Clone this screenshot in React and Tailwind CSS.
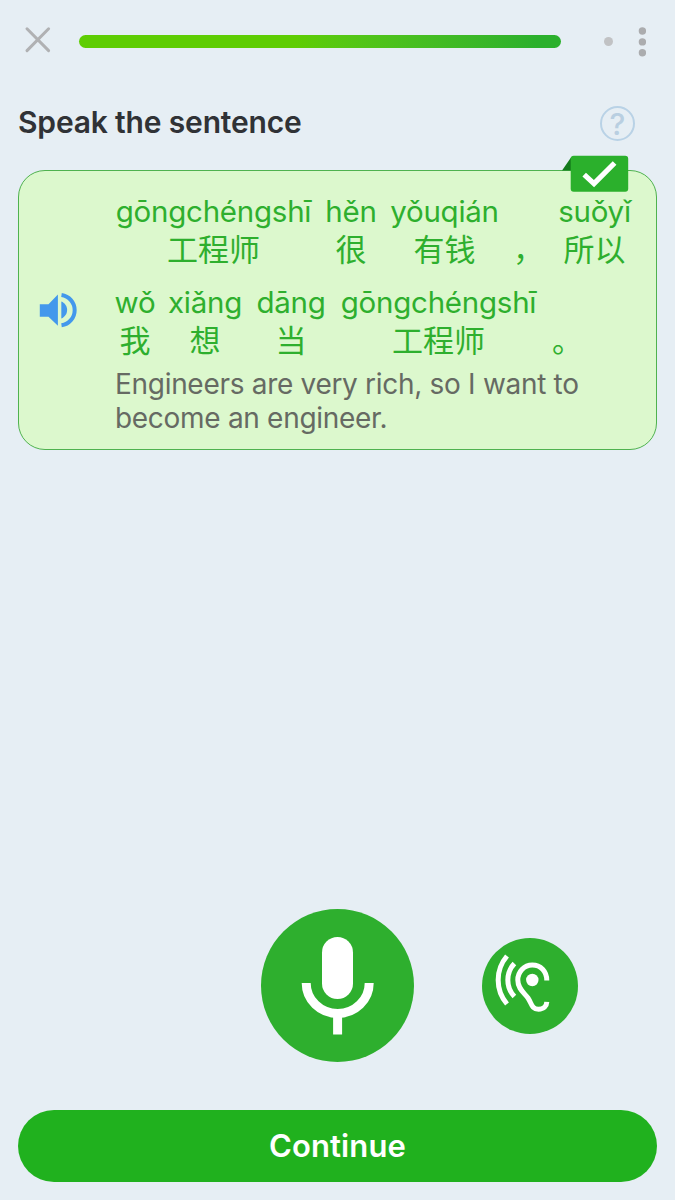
const LINE_ONE = [
  { pinyin: 'gōngchéngshī', hanzi: '工程师', cell: 'w-[195px]' },
  { pinyin: 'hěn', hanzi: '很', cell: 'w-[50px]' },
  { pinyin: 'yǒuqián', hanzi: '有钱', cell: 'w-[107px]' },
  { pinyin: '', hanzi: '，', cell: 'w-[31px]' },
  { pinyin: 'suǒyǐ', hanzi: '所以', cell: 'w-[71px]' },
];

const LINE_TWO = [
  { pinyin: 'wǒ', hanzi: '我', cell: 'w-[38px]' },
  { pinyin: 'xiǎng', hanzi: '想', cell: 'w-[72px]' },
  { pinyin: 'dāng', hanzi: '当', cell: 'w-[70px]' },
  { pinyin: 'gōngchéngshī', hanzi: '工程师', cell: 'w-[195px]' },
  { pinyin: '', hanzi: '。', cell: 'w-[33px]' },
];

function WordLine({ words }) {
  return (
    <div className="flex gap-[15px] text-[#2eaf2e]">
      {words.map((w, i) => (
        <div key={i} className={`flex shrink-0 flex-col items-center whitespace-nowrap ${w.cell}`}>
          <span className="h-[38px] text-[29.5px] leading-[38px] tracking-[-0.25px]">{w.pinyin}</span>
          <span className="h-9 font-['Noto_Sans_CJK_SC',sans-serif] text-[31px] leading-9 font-normal">{w.hanzi}</span>
        </div>
      ))}
    </div>
  );
}

function Header() {
  return (
    <header className="flex h-20 items-center pl-6">
      <svg className="h-7 w-7" viewBox="0 0 28 28" fill="none" stroke="#b0b1b3" strokeWidth="3" strokeLinecap="round">
        <path d="M3 2.8 24.6 24.6M24.6 2.8 3 24.6" />
      </svg>
      <div className="mt-[3px] ml-[27px] h-[13px] w-[482px] rounded-full bg-linear-to-r from-[#5ecd02] from-45% to-[#2bb02c] to-95%" />
      <div className="mt-[3px] ml-[43px] h-[9px] w-[9px] rounded-full bg-[#c1c2c4]" />
      <svg className="mt-[3px] ml-[25px] h-[30px] w-2" viewBox="0 0 8 30" fill="#abacae">
        <circle cx="4.4" cy="4" r="3.7" />
        <circle cx="4.4" cy="14.9" r="3.7" />
        <circle cx="4.4" cy="25.7" r="3.7" />
      </svg>
    </header>
  );
}

function CheckRibbon() {
  return (
    <svg className="absolute -top-4 left-[543px] h-[37px] w-[67px]" viewBox="0 0 67 37">
      <path d="M0 15.5 9 2.5V15.5Z" fill="#137a1b" />
      <rect x="8.7" y="0.7" width="57.5" height="36" rx="3" fill="#2bb02c" />
      <path d="M22.2 19.6 32 28.6 52.6 8" fill="none" stroke="#fff" strokeWidth="5.2" />
    </svg>
  );
}

export default function App() {
  return (
    <div className="flex h-[1200px] w-[675px] flex-col overflow-hidden bg-[#e6eef4] font-['Inter',sans-serif]">
      <Header />

      <div className="flex h-[90px] items-start justify-between pt-[22px] pr-10 pl-[18px]">
        <h1 className="text-[30px] leading-10 font-semibold tracking-[-0.17px] text-[#303236]">Speak the sentence</h1>
        <div className="mt-1 flex h-[35px] w-[35px] items-center justify-center rounded-full border-2 border-[#b9d2e6] text-[30px] leading-none font-medium text-[#b9cfe1]">
          ?
        </div>
      </div>

      <section className="relative mx-[18px] flex h-[280px] shrink-0 rounded-[27px] border border-[#4fb24f] bg-[#dcf8cd]">
        <CheckRibbon />
        <div className="flex w-[97px] shrink-0 items-center pl-[19.5px]">
          <svg className="h-9 w-[38px]" viewBox="0 0 38 36" fill="#4398ec">
            <path d="M.8 12.3H9.5L18.9 2.5V33.8L9.5 24.7H.8Z" />
            <path d="M22.3 9.6C26 11 28.1 14.4 28.1 18S26 25 22.3 26.6Z" />
            <path d="M22.5 3A15.3 15.3 0 0 1 22.5 33.3" fill="none" stroke="#4398ec" strokeWidth="4" />
          </svg>
        </div>
        <div className="pt-[21px]">
          <WordLine words={LINE_ONE} />
          <div className="h-[17px]" />
          <WordLine words={LINE_TWO} />
          <p className="mt-2.5 -ml-px text-[28px] leading-[34px] tracking-[-0.3px] whitespace-nowrap text-[#666a63]">
            Engineers are very rich, so I want to
            <br />
            become an engineer.
          </p>
        </div>
      </section>

      <div className="flex-1" />

      <div className="flex h-[154px] shrink-0 items-center pl-[261px]">
        <button className="h-[153px] w-[153px] rounded-full bg-[#2eaf2e]">
          <svg className="h-[153px] w-[153px]" viewBox="0 0 153 153">
            <rect x="61" y="28" width="31" height="62" rx="15.5" fill="#fff" />
            <path d="M45.2 74A31.5 30.5 0 0 0 108.2 74" fill="none" stroke="#fff" strokeWidth="9" />
            <path d="M76.6 104V125.5" stroke="#fff" strokeWidth="9" />
          </svg>
        </button>
        <button className="mt-0.5 ml-[67.5px] h-24 w-24 rounded-full bg-[#2eaf2e]">
          <svg className="h-24 w-24" viewBox="0 0 96 96" fill="none" stroke="#fff" strokeWidth="5">
            <path d="M25 18A37 37 0 0 0 25 66" />
            <path d="M32.4 25.5A24 24 0 0 0 32.4 58.5" />
            <path d="M64.8 42.5C64.8 33 58.5 27 50.3 27C42 27 35.8 33.8 35.8 42C35.8 51 42.5 55 46 60C49.5 65 49.5 71.2 56.5 71.2C62 71.2 64.6 68 64.8 63.8" />
            <circle cx="50.3" cy="42" r="6.2" fill="#fff" stroke="none" />
          </svg>
        </button>
      </div>

      <button className="mx-[18px] mt-12 mb-[18px] h-[72px] shrink-0 rounded-full bg-[#20b11e] text-[31px] font-semibold tracking-[0.1px] text-white">
        Continue
      </button>
    </div>
  );
}
